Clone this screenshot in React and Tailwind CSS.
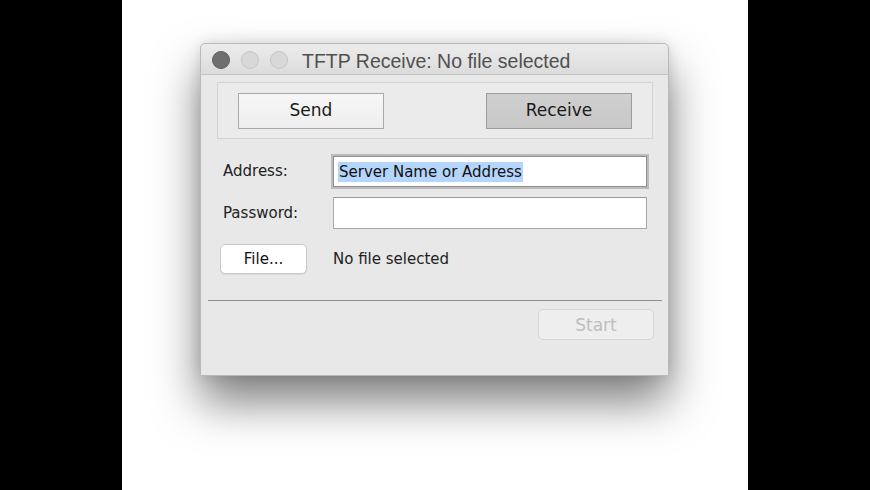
import React from 'react';

const ui = { fontFamily: '"DejaVu Sans", Verdana, sans-serif' };
const title = { fontFamily: '"Liberation Sans", Arial, sans-serif' };

function Light({ dark }) {
  return (
    <span
      className={
        dark
          ? 'w-[18px] h-[18px] rounded-full bg-[#6f6f6f] border border-[#5e5e5e]'
          : 'w-[18px] h-[18px] rounded-full bg-[#d8d8d8] border border-[#c6c6c6]'
      }
    />
  );
}

export default function App() {
  return (
    <div className="flex w-[870px] h-[490px] bg-black overflow-hidden" style={ui}>
      <div className="w-[122px] shrink-0" />
      <div className="w-[626px] shrink-0 bg-white pl-[78px] pt-[43px]">
        <div className="w-[469px] h-[333px] bg-[#e8e8e8] rounded-t-[5px] border border-[#b9b9b9] shadow-[0_26px_46px_rgba(0,0,0,0.5),0_0_14px_rgba(0,0,0,0.12)] flex flex-col">
          {/* title bar */}
          <div className="h-[31px] flex items-center pl-[11px] rounded-t-[5px] bg-gradient-to-b from-[#ececec] to-[#dcdcdc] border-b border-[#c4c4c4]">
            <div className="flex gap-[11px] pt-[2px]">
              <Light dark />
              <Light />
              <Light />
            </div>
            <span className="ml-[14px] pt-[6px] text-[19.5px] text-[#505050] leading-none" style={title}>
              TFTP Receive: No file selected
            </span>
          </div>

          {/* send / receive */}
          <div className="ml-[16px] mt-[7px] w-[436px] h-[57px] border border-[#d3d3d3] bg-[#ebebeb] flex items-center justify-between px-[20px]">
            <button className="w-[146px] h-[36px] border border-[#a9a9a9] bg-gradient-to-b from-[#f7f7f7] to-[#eeeeee] text-[17px] text-[#1a1a1a]">
              Send
            </button>
            <button className="w-[146px] h-[36px] border border-[#9c9c9c] bg-gradient-to-b from-[#cfcfcf] to-[#c8c8c8] text-[17px] text-[#1a1a1a]">
              Receive
            </button>
          </div>

          {/* address */}
          <div className="flex items-center pl-[22px] mt-[17px]">
            <span className="w-[110px] text-[15px] text-[#222]">Address:</span>
            <div className="w-[314px] h-[31px] bg-white border border-[#8f8f8f] shadow-[0_0_0_2px_#bcbcbc] flex items-center pl-[4px]">
              <span className="bg-[#b4d5fc] text-[15px] text-[#111] leading-[20px] px-[1px]">Server Name or Address</span>
            </div>
          </div>

          {/* password */}
          <div className="flex items-center pl-[22px] mt-[10px]">
            <span className="w-[110px] text-[15px] text-[#222]">Password:</span>
            <div className="w-[314px] h-[32px] bg-white border border-[#a8a8a8] border-t-[#979797]" />
          </div>

          {/* file */}
          <div className="flex items-center pl-[19px] mt-[15px]">
            <button className="w-[87px] h-[30px] rounded-[5px] bg-white border border-[#c8c8c8] shadow-[0_1px_0_rgba(0,0,0,0.06)] text-[15px] text-[#111]">
              File...
            </button>
            <span className="ml-[26px] text-[15px] text-[#222]">No file selected</span>
          </div>

          <div className="mt-[26px] ml-[7px] mr-[6px] h-px bg-[#8e8e8e]" />

          <div className="flex justify-end mr-[14px] mt-[8px]">
            <button className="w-[116px] h-[31px] rounded-[5px] bg-[#eeeeee] border border-[#d6d6d6] pt-[2px] text-[17px] text-[#bdbdbd]">
              Start
            </button>
          </div>
        </div>
      </div>
      <div className="flex-1" />
    </div>
  );
}
